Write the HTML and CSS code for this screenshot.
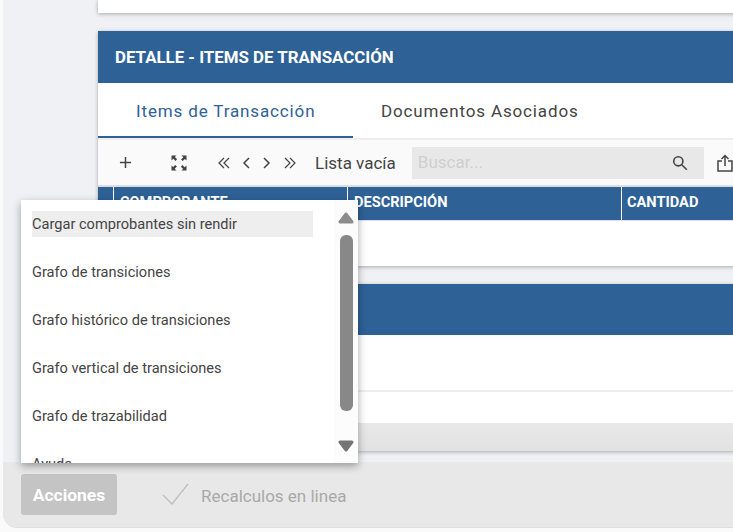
FILE: index.html
```html
<!DOCTYPE html>
<html lang="es">
<head>
<meta charset="utf-8">
<title>Detalle</title>
<link rel="stylesheet" href="styles.css">
</head>
<body>
<div class="shell">
  <main class="content">
    <section class="card card-top"></section>
    <section class="card card-detail">
      <h2 class="card-title">DETALLE - ITEMS DE TRANSACCIÓN</h2>
      <div class="tabs">
        <div class="tab tab-active">Items de Transacción</div>
        <div class="tab">Documentos Asociados</div>
      </div>
      <div class="toolbar">
        <svg class="ico ico-plus" viewBox="0 0 14 14"><path d="M7 1v12M1 7h12"/></svg>
        <svg class="ico ico-expand" viewBox="0 0 16 16"><path class="solid" d="M0.5 0.5h5l-1.6 1.6 2.2 2.2-1.6 1.6-2.2-2.2-1.8 1.8zM15.5 0.5v5l-1.6-1.6-2.2 2.2-1.6-1.6 2.2-2.2-1.8-1.8zM0.5 15.5v-5l1.6 1.6 2.2-2.2 1.6 1.6-2.2 2.2 1.8 1.8zM15.5 15.5h-5l1.6-1.6-2.2-2.2 1.6-1.6 2.2 2.2 1.8-1.800z"/></svg>
        <svg class="ico ico-dbl" viewBox="0 0 12 12"><path d="M6 1 1 6l5 5M11 1 6 6l5 5"/></svg>
        <svg class="ico ico-single" viewBox="0 0 8 12"><path d="M7 1 2 6l5 5"/></svg>
        <svg class="ico ico-single ico-next" viewBox="0 0 8 12"><path d="M1 1l5 5-5 5"/></svg>
        <svg class="ico ico-dbl ico-last" viewBox="0 0 12 12"><path d="M1 1l5 5-5 5M6 1l5 5-5 5"/></svg>
        <span class="count">Lista vacía</span>
        <div class="search">
          <span class="placeholder">Buscar...</span>
          <svg class="ico ico-search" viewBox="0 0 16 16"><circle cx="6.3" cy="6.3" r="4.6"/><path d="m9.8 9.8 5 5"/></svg>
        </div>
        <svg class="ico ico-share" viewBox="0 0 16 18"><path d="M8 12V1.5M4.500 5 8 1.500 11.500 5M5 7H1v10h14V7h-4"/></svg>
      </div>
      <div class="thead">
        <div class="th th-check"></div>
        <div class="th th-comp">COMPROBANTE</div>
        <div class="th th-desc">DESCRIPCIÓN</div>
        <div class="th th-cant">CANTIDAD</div>
      </div>
      <div class="tbody-empty"></div>
    </section>
    <section class="card card-lower">
      <div class="lower-head"></div>
      <div class="lower-row"></div>
      <div class="lower-row lower-row-short"></div>
      <div class="lower-foot"></div>
    </section>
  </main>
  <footer class="actions">
    <button class="btn-actions" type="button">Acciones</button>
    <svg class="ico-check" viewBox="0 0 27 23"><path d="M1 12l9 9L26 1"/></svg>
    <span class="recalc">Recalculos en linea</span>
  </footer>
</div>
<div class="menu">
  <ul class="menu-list">
    <li class="menu-item menu-item-hover">Cargar comprobantes sin rendir</li>
    <li class="menu-item">Grafo de transiciones</li>
    <li class="menu-item">Grafo histórico de transiciones</li>
    <li class="menu-item">Grafo vertical de transiciones</li>
    <li class="menu-item">Grafo de trazabilidad</li>
    <li class="menu-item">Ayuda</li>
  </ul>
  <div class="menu-scroll">
    <svg class="arrow arrow-up" viewBox="0 0 16 12"><path d="M8 2 2 10h12z"/></svg>
    <span class="thumb"></span>
    <svg class="arrow arrow-down" viewBox="0 0 16 12"><path d="M2 2h12l-6 8z"/></svg>
  </div>
</div>
</body>
</html>
```
FILE: styles.css
```css
* { box-sizing: border-box; }
html, body { margin: 0; height: 100%; }
body {
  width: 733px;
  height: 532px;
  overflow: hidden;
  background: #fafafa;
  font-family: Roboto, "Liberation Sans", sans-serif;
  position: relative;
}
.shell {
  margin-left: 3px;
  height: 528px;
  display: flex;
  flex-direction: column;
  background: #f0f1f5;
  border-bottom-left-radius: 14px;
  overflow: hidden;
  border-bottom: 1px solid #dedede;
}
.content {
  height: 462px;
  flex: none;
  padding-left: 95px;
  overflow: hidden;
  box-shadow: 0 2px 4px rgba(0,0,0,.12);
}
.card {
  width: 660px;
  background: #fff;
  box-shadow: 0 1px 4px rgba(0,0,0,.3);
}
.card-top { height: 13px; margin-bottom: 18px; }
.card-detail { height: 235px; margin-bottom: 18px; }
.card-title {
  margin: 0;
  height: 52px;
  background: #2e6196;
  color: #fff;
  font-size: 16.85px;
  font-weight: 700;
  line-height: 52px;
  padding-left: 17px;
}
.tabs {
  display: flex;
  height: 55px;
}
.tab {
  height: 55px;
  line-height: 57px;
  font-size: 17px;
  letter-spacing: .86px;
  color: #444;
  padding-left: 28px;
}
.tab-active {
  width: 255px;
  padding-left: 38px;
  color: #2e6196;
  border-bottom: 2px solid #2e6196;
}
.toolbar {
  display: flex;
  align-items: center;
  height: 49px;
  background: #fafafa;
  border-top: 2px solid #eee;
  border-bottom: 2px solid #ddd;
  padding-left: 21px;
}
.ico { flex: none; fill: none; stroke: #444; stroke-width: 1.5; }
.ico-plus { width: 13px; height: 13px; stroke-width: 1.6; }
.ico-expand { width: 16px; height: 16px; margin-left: 39px; stroke: none; }
.ico-expand .solid { fill: #444; }
.ico-dbl { width: 12px; height: 12px; margin-left: 31px; stroke-width: 1.2; }
.ico-single { width: 8px; height: 12px; margin-left: 12px; stroke-width: 1.5; }
.ico-next { margin-left: 13px; }
.ico-last { margin-left: 13px; }
.count { margin-left: 19px; font-size: 17px; color: #444; white-space: nowrap; }
.search {
  display: flex;
  align-items: center;
  justify-content: space-between;
  width: 292px;
  height: 32px;
  margin-left: 16px;
  padding: 0 16px 0 6px;
  background: #e8e8e8;
  flex: none;
}
.placeholder { font-size: 17px; color: #cfcfcf; padding-bottom: 2px; }
.ico-search { width: 16px; height: 16px; stroke-width: 1.6; }
.ico-share { width: 16px; height: 18px; margin-left: 13px; }
.thead {
  display: flex;
  height: 34px;
  background: #2e6196;
  border-bottom: 1px solid #dde;
}
.th {
  color: #fff;
  font-size: 14.6px;
  font-weight: 700;
  line-height: 30px;
  padding-left: 6px;
  border-right: 1px solid #fff;
  flex: none;
}
.th-check { width: 16px; padding: 0; }
.th-comp { width: 234px; }
.th-desc { width: 274px; }
.th-cant { border-right: 0; padding-left: 5px; }
.tbody-empty { height: 45px; }
.card-lower { height: 167px; }
.lower-head { height: 51px; background: #2e6196; }
.lower-row { height: 57px; border-bottom: 2px solid #eee; }
.lower-row-short { height: 31px; border-bottom: 0; }
.lower-foot { height: 28px; background: linear-gradient(#e8e8e8, #e2e2e2); }
.actions {
  flex: 1;
  display: flex;
  align-items: center;
  background: #e8e8e8;
  padding: 0 0 1px 18px;
  position: relative;
}
.btn-actions {
  width: 96px;
  height: 41px;
  border: 0;
  border-radius: 3px;
  background: #c4c4c4;
  color: #fff;
  font: 700 17.4px Roboto, "Liberation Sans", sans-serif;
  padding: 1px 0 0;
}
.ico-check { width: 27px; height: 23px; margin-left: 45px; fill: none; stroke: #bdbdbd; stroke-width: 1.3; }
.recalc { margin-left: 12px; font-size: 17px; color: #a8a8a8; padding-top: 3px; }
.menu {
  position: absolute;
  left: 21px;
  top: 200px;
  width: 337px;
  height: 263px;
  background: #fff;
  box-shadow: 0 3px 8px rgba(0,0,0,.35);
  overflow: hidden;
}
.menu-list {
  list-style: none;
  margin: 0;
  padding: 11px 0 0 11px;
}
.menu-item {
  width: 281px;
  height: 26px;
  margin-bottom: 22px;
  line-height: 26px;
  font-size: 14.6px;
  color: #444;
}
.menu-item-hover { background: #eee; }
.menu-scroll {
  position: absolute;
  right: 0;
  top: 0;
  width: 24px;
  height: 100%;
  background: #fcfcfc;
}
.thumb {
  position: absolute;
  left: 6px;
  top: 35px;
  width: 13px;
  height: 176px;
  border-radius: 6px;
  background: #888;
}
.arrow { position: absolute; left: 4px; width: 16px; height: 12px; stroke-width: 3; stroke-linejoin: round; }
.arrow-up { top: 12px; fill: #8c8c8c; stroke: #8c8c8c; }
.arrow-down { top: 240px; fill: #757575; stroke: #757575; }
```
